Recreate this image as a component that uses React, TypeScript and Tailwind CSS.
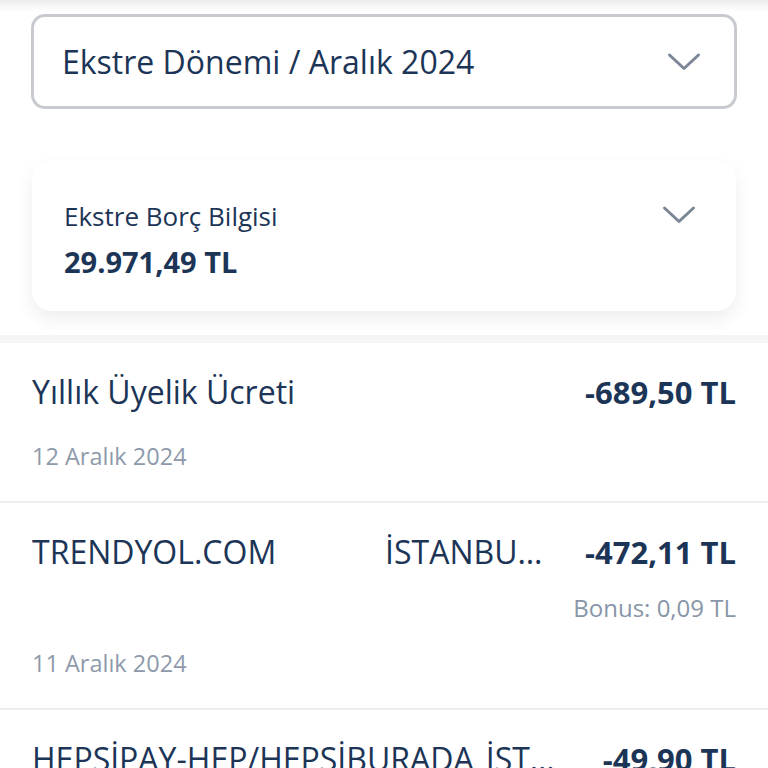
interface Transaction {
  title: string;
  location?: string;
  amount: string;
  bonus?: string;
  date: string;
}

const transactions: Transaction[] = [
  { title: 'Yıllık Üyelik Ücreti', amount: '-689,50 TL', date: '12 Aralık 2024' },
  {
    title: 'TRENDYOL.COM',
    location: 'İSTANBUL TR',
    amount: '-472,11 TL',
    bonus: 'Bonus: 0,09 TL',
    date: '11 Aralık 2024',
  },
  {
    title: 'HEPSİPAY-HEP/HEPSİBURADA',
    location: 'İSTANBUL TR',
    amount: '-49,90 TL',
    date: '10 Aralık 2024',
  },
];

function Chevron() {
  return (
    <svg width="34" height="20" viewBox="0 0 34 20" fill="none" className="shrink-0 text-[#7b8796]">
      <polyline
        points="2.5,3 17,16.5 31.5,3"
        stroke="currentColor"
        strokeWidth="3"
        strokeLinecap="round"
        strokeLinejoin="round"
      />
    </svg>
  );
}

export default function App() {
  return (
    <div
      className="h-[768px] overflow-hidden bg-white text-[#1c3557]"
      style={{ fontFamily: '"Open Sans", sans-serif' }}
    >
      <div className="h-[12px] bg-gradient-to-b from-[#ececec] to-white" />

      {/* Statement period + debt card */}
      <div className="pt-[2px] pb-6">
        <button className="mx-[31px] flex h-[95px] w-[706px] items-center justify-between rounded-[14px] border-[3px] border-[#c7cbd0] bg-white pl-[28px] pr-[33px]">
          <span className="text-[32px] leading-none">Ekstre Dönemi / Aralık 2024</span>
          <Chevron />
        </button>

        <div className="mx-8 mt-[51px] flex h-[151px] items-start justify-between rounded-[20px] bg-white pl-8 pr-[40px] pt-[39px] shadow-[0_8px_18px_rgba(0,0,0,0.07)]">
          <div>
            <div className="text-[26px] leading-[34px]">Ekstre Borç Bilgisi</div>
            <div className="mt-[12px] text-[29px] font-bold leading-[34px]">29.971,49 TL</div>
          </div>
          <div className="mt-[6px]">
            <Chevron />
          </div>
        </div>
      </div>

      {/* Transactions */}
      <div className="border-t-[8px] border-[#f5f5f5]">
        {transactions.map((t) => (
          <div key={t.title} className="border-b-2 border-[#ededed] px-8 pt-[30px] pb-[30px]">
            <div className="flex items-center leading-[38px]">
              <span className="shrink-0 text-[32px]">{t.title}</span>
              {t.location && (
                <span className="ml-auto min-w-0 max-w-[176px] truncate pl-3 text-[32px]">{t.location}</span>
              )}
              <span className={`shrink-0 text-[31px] font-bold ${t.location ? 'pl-9' : 'ml-auto'}`}>
                {t.amount}
              </span>
            </div>
            {t.bonus && (
              <div className="mt-[22px] text-right text-[24px] leading-[30px] text-[#8896a8]">{t.bonus}</div>
            )}
            <div className={`${t.bonus ? 'mt-[25px]' : 'mt-[30px]'} text-[23.5px] leading-[30px] text-[#8e9aab]`}>
              {t.date}
            </div>
          </div>
        ))}
      </div>
    </div>
  );
}
